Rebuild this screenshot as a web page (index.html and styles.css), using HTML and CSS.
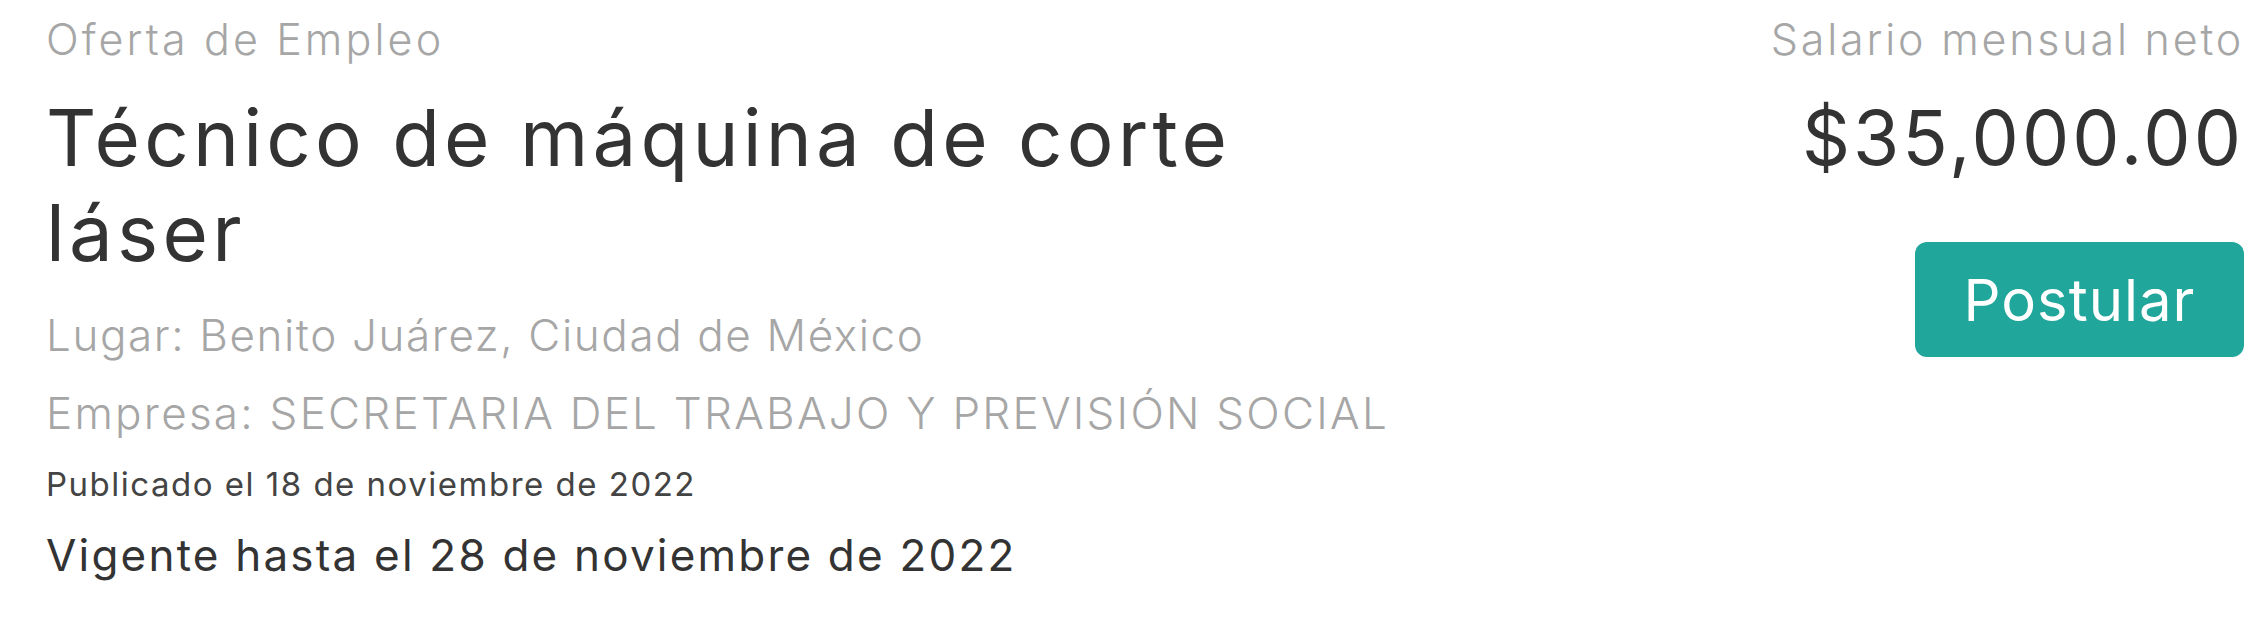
FILE: index.html
```html
<!DOCTYPE html>
<html lang="es">
<head>
<meta charset="utf-8">
<title>Oferta de Empleo</title>
<link rel="stylesheet" href="styles.css">
</head>
<body>
<div class="offer">
  <div class="offer-main">
    <p class="label">Oferta de Empleo</p>
    <h1 class="title">Técnico de máquina de corte láser</h1>
    <p class="meta meta-place">Lugar: Benito Juárez, Ciudad de México</p>
    <p class="meta meta-company">Empresa: SECRETARIA DEL TRABAJO Y PREVISIÓN SOCIAL</p>
    <p class="published">Publicado el 18 de noviembre de 2022</p>
    <p class="valid">Vigente hasta el 28 de noviembre de 2022</p>
  </div>
  <div class="offer-side">
    <p class="label label-salary">Salario mensual neto</p>
    <p class="salary">$35,000.00</p>
    <button class="apply" type="button">Postular</button>
  </div>
</div>
</body>
</html>
```
FILE: styles.css
```css
html, body {
  margin: 0;
  padding: 0;
  background: #ffffff;
}

body {
  font-family: Inter, "Open Sans", "Liberation Sans", sans-serif;
  color: #333333;
}

.offer {
  display: flex;
  justify-content: space-between;
  align-items: flex-start;
  padding: 13px 8px 0 46px;
}

.offer-main {
  display: flex;
  flex-direction: column;
}

.offer-side {
  display: flex;
  flex-direction: column;
  align-items: flex-end;
}

.label {
  margin: 0;
  font-size: 43px;
  line-height: 52px;
  font-weight: 300;
  color: #a6a6a6;
  letter-spacing: 3.1px;
}

.label-salary {
  letter-spacing: 2.8px;
}

.title {
  margin: 25px 0 0;
  max-width: 1300px;
  font-size: 78px;
  line-height: 95px;
  font-weight: 400;
  color: #333333;
  letter-spacing: 4.2px;
}

.meta {
  margin: 0;
  font-size: 44px;
  line-height: 78px;
  font-weight: 300;
  color: #a6a6a6;
  letter-spacing: 1.6px;
}

.meta-place {
  margin-top: 16px;
}

.meta-company {
  letter-spacing: 2.25px;
}

.published {
  margin: 10px 0 0;
  font-size: 33px;
  line-height: 44px;
  font-weight: 400;
  color: #444444;
  letter-spacing: 1.5px;
}

.valid {
  margin: 19px 0 0;
  font-size: 44px;
  line-height: 60px;
  font-weight: 400;
  color: #333333;
  letter-spacing: 2.2px;
}

.salary {
  margin: 25px 0 0;
  font-size: 75px;
  line-height: 95px;
  font-weight: 400;
  color: #333333;
  letter-spacing: 3px;
}

.apply {
  margin-top: 57px;
  width: 329px;
  height: 115px;
  border: none;
  border-radius: 12px;
  background: #20a69a;
  color: #ffffff;
  font-family: inherit;
  font-size: 58px;
  font-weight: 400;
  letter-spacing: 1px;
  padding: 0;
}
```
